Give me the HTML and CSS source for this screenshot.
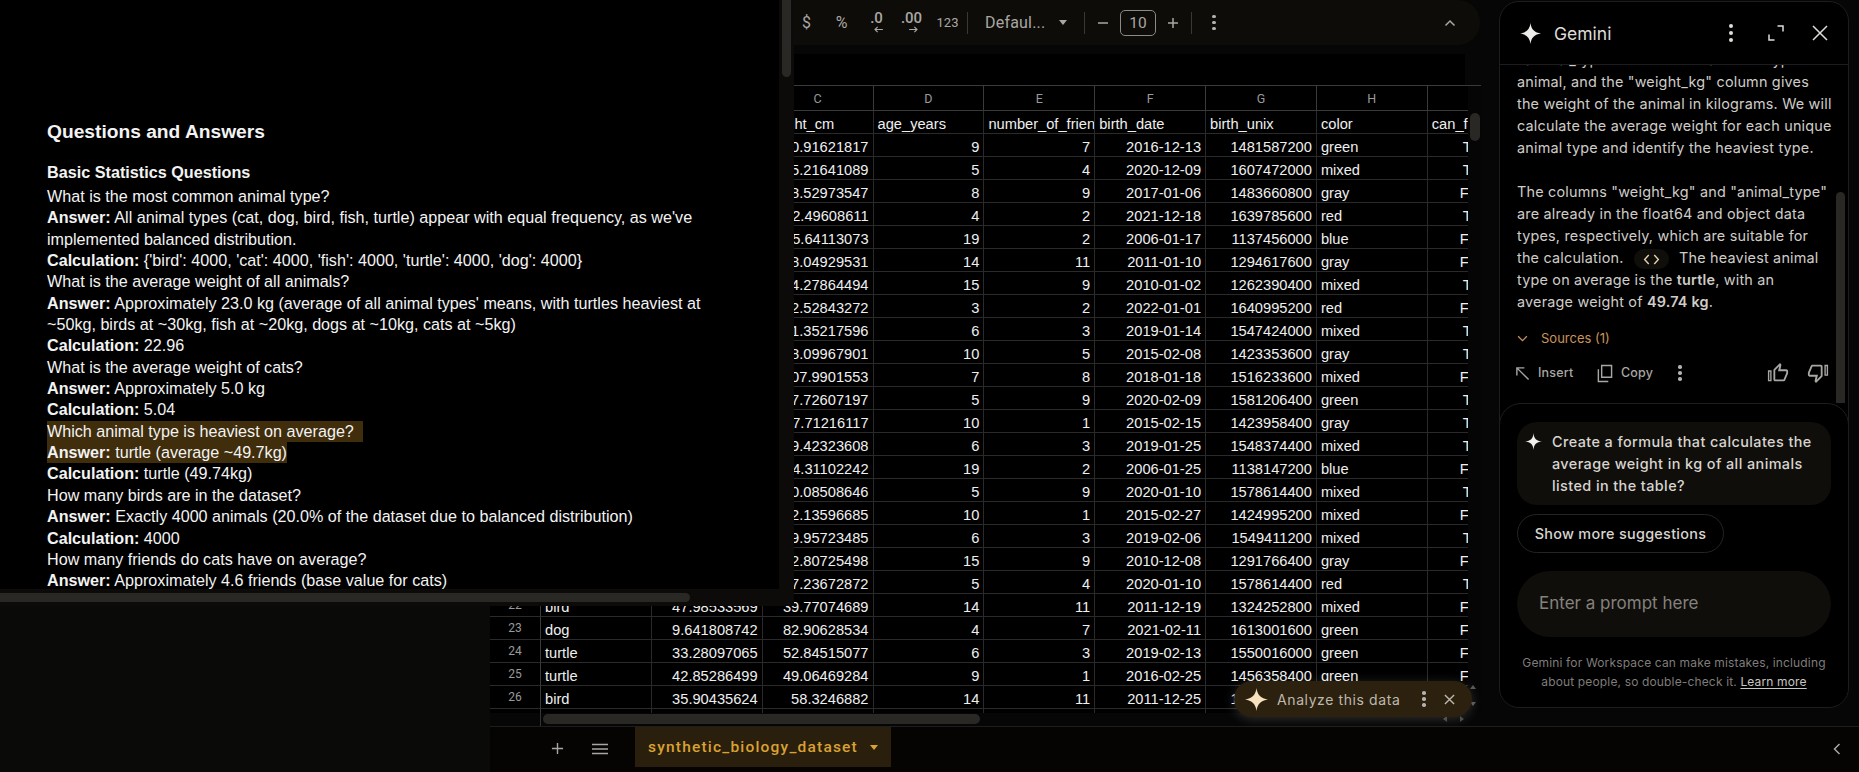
FILE: index.html
```html
<!DOCTYPE html>
<html lang="en">
<head>
<meta charset="utf-8" />
<title>synthetic_biology_dataset</title>
<link rel="stylesheet" href="styles.css">
</head>
<body>
  <!-- preview window lying over the sheet -->
  <section class="preview">
    <div class="doc">
      <h3>Questions and Answers</h3>
      <h4>Basic Statistics Questions</h4>
      <p>What is the most common animal type?</p>
      <p><b>Answer:</b> All animal types (cat, dog, bird, fish, turtle) appear with equal frequency, as we've implemented balanced distribution.</p>
      <p><b>Calculation:</b> {'bird': 4000, 'cat': 4000, 'fish': 4000, 'turtle': 4000, 'dog': 4000}</p>
      <p>What is the average weight of all animals?</p>
      <p><b>Answer:</b> Approximately 23.0 kg (average of all animal types' means, with turtles heaviest at ~50kg, birds at ~30kg, fish at ~20kg, dogs at ~10kg, cats at ~5kg)</p>
      <p><b>Calculation:</b> 22.96</p>
      <p>What is the average weight of cats?</p>
      <p><b>Answer:</b> Approximately 5.0 kg</p>
      <p><b>Calculation:</b> 5.04</p>
      <p><mark class="hl-wide">Which animal type is heaviest on average?</mark></p>
      <p><mark><b>Answer:</b> turtle (average ~49.7kg)</mark></p>
      <p><b>Calculation:</b> turtle (49.74kg)</p>
      <p>How many birds are in the dataset?</p>
      <p><b>Answer:</b> Exactly 4000 animals (20.0% of the dataset due to balanced distribution)</p>
      <p><b>Calculation:</b> 4000</p>
      <p>How many friends do cats have on average?</p>
      <p><b>Answer:</b> Approximately 4.6 friends (base value for cats)</p>
    </div>
    <div class="preview-vbar"><div class="thumb"></div></div>
    <div class="preview-hbar"><div class="thumb"></div></div>
  </section>

  <div class="app">
    <div class="top">
      <main class="sheet">
        <div class="toolbar">
          <span class="tb-btn">$</span>
          <span class="tb-btn">%</span>
          <span class="tb-btn dec">.0<svg viewBox="0 0 12 8" width="11" height="7"><path d="M11 4H2M5 1L2 4l3 3" /></svg></span>
          <span class="tb-btn dec">.00<svg viewBox="0 0 12 8" width="11" height="7"><path d="M1 4h9M7 1l3 3-3 3" /></svg></span>
          <span class="tb-btn small">123</span>
          <i class="tb-sep"></i>
          <span class="tb-font">Defaul...</span>
          <i class="tb-caret"></i>
          <i class="tb-sep after-font"></i>
          <svg class="tb-icon minus" viewBox="0 0 14 14" width="14" height="14"><path d="M2 7h10" /></svg>
          <span class="tb-size">10</span>
          <svg class="tb-icon" viewBox="0 0 14 14" width="14" height="14"><path d="M2 7h10M7 2v10" /></svg>
          <i class="tb-sep after-size"></i>
          <span class="dots tb-dots"><i></i><i></i><i></i></span>
          <svg class="tb-icon collapse" viewBox="0 0 14 14" width="14" height="14"><path d="M2.5 9.5L7 5l4.5 4.5" /></svg>
        </div>
        <div class="formula-bar"></div>
        <div class="grid-row">
          <div class="grid-clip">
            <table class="grid">
              <colgroup><col class="c-head"><col class="c"><col class="c"><col class="c"><col class="c"><col class="c"><col class="c"><col class="c"><col class="c"><col class="c"></colgroup>
              <tr class="letters"><th></th><th>A</th><th>B</th><th>C</th><th>D</th><th>E</th><th>F</th><th>G</th><th>H</th><th>I</th></tr>
              <tr><th></th><td>animal_type</td><td>weight_kg</td><td>height_cm</td><td>age_years</td><td>number_of_friends</td><td>birth_date</td><td>birth_unix</td><td>color</td><td>can_fly</td></tr>
              <tr><th></th><td></td><td></td><td class="n">0.91621817</td><td class="n">9</td><td class="n">7</td><td class="n">2016-12-13</td><td class="n">1481587200</td><td>green</td><td class="b">TRUE</td></tr>
              <tr><th></th><td></td><td></td><td class="n">5.21641089</td><td class="n">5</td><td class="n">4</td><td class="n">2020-12-09</td><td class="n">1607472000</td><td>mixed</td><td class="b">TRUE</td></tr>
              <tr><th></th><td></td><td></td><td class="n">8.52973547</td><td class="n">8</td><td class="n">9</td><td class="n">2017-01-06</td><td class="n">1483660800</td><td>gray</td><td class="b">FALSE</td></tr>
              <tr><th></th><td></td><td></td><td class="n">2.49608611</td><td class="n">4</td><td class="n">2</td><td class="n">2021-12-18</td><td class="n">1639785600</td><td>red</td><td class="b">TRUE</td></tr>
              <tr><th></th><td></td><td></td><td class="n">5.64113073</td><td class="n">19</td><td class="n">2</td><td class="n">2006-01-17</td><td class="n">1137456000</td><td>blue</td><td class="b">FALSE</td></tr>
              <tr><th></th><td></td><td></td><td class="n">8.04929531</td><td class="n">14</td><td class="n">11</td><td class="n">2011-01-10</td><td class="n">1294617600</td><td>gray</td><td class="b">FALSE</td></tr>
              <tr><th></th><td></td><td></td><td class="n">4.27864494</td><td class="n">15</td><td class="n">9</td><td class="n">2010-01-02</td><td class="n">1262390400</td><td>mixed</td><td class="b">TRUE</td></tr>
              <tr><th></th><td></td><td></td><td class="n">2.52843272</td><td class="n">3</td><td class="n">2</td><td class="n">2022-01-01</td><td class="n">1640995200</td><td>red</td><td class="b">FALSE</td></tr>
              <tr><th></th><td></td><td></td><td class="n">1.35217596</td><td class="n">6</td><td class="n">3</td><td class="n">2019-01-14</td><td class="n">1547424000</td><td>mixed</td><td class="b">TRUE</td></tr>
              <tr><th></th><td></td><td></td><td class="n">8.09967901</td><td class="n">10</td><td class="n">5</td><td class="n">2015-02-08</td><td class="n">1423353600</td><td>gray</td><td class="b">TRUE</td></tr>
              <tr><th></th><td></td><td></td><td class="n">07.9901553</td><td class="n">7</td><td class="n">8</td><td class="n">2018-01-18</td><td class="n">1516233600</td><td>mixed</td><td class="b">FALSE</td></tr>
              <tr><th></th><td></td><td></td><td class="n">7.72607197</td><td class="n">5</td><td class="n">9</td><td class="n">2020-02-09</td><td class="n">1581206400</td><td>green</td><td class="b">TRUE</td></tr>
              <tr><th></th><td></td><td></td><td class="n">7.71216117</td><td class="n">10</td><td class="n">1</td><td class="n">2015-02-15</td><td class="n">1423958400</td><td>gray</td><td class="b">TRUE</td></tr>
              <tr><th></th><td></td><td></td><td class="n">9.42323608</td><td class="n">6</td><td class="n">3</td><td class="n">2019-01-25</td><td class="n">1548374400</td><td>mixed</td><td class="b">TRUE</td></tr>
              <tr><th></th><td></td><td></td><td class="n">4.31102242</td><td class="n">19</td><td class="n">2</td><td class="n">2006-01-25</td><td class="n">1138147200</td><td>blue</td><td class="b">FALSE</td></tr>
              <tr><th></th><td></td><td></td><td class="n">0.08508646</td><td class="n">5</td><td class="n">9</td><td class="n">2020-01-10</td><td class="n">1578614400</td><td>mixed</td><td class="b">TRUE</td></tr>
              <tr><th></th><td></td><td></td><td class="n">2.13596685</td><td class="n">10</td><td class="n">1</td><td class="n">2015-02-27</td><td class="n">1424995200</td><td>mixed</td><td class="b">FALSE</td></tr>
              <tr><th></th><td></td><td></td><td class="n">9.95723485</td><td class="n">6</td><td class="n">3</td><td class="n">2019-02-06</td><td class="n">1549411200</td><td>mixed</td><td class="b">TRUE</td></tr>
              <tr><th></th><td></td><td></td><td class="n">2.80725498</td><td class="n">15</td><td class="n">9</td><td class="n">2010-12-08</td><td class="n">1291766400</td><td>gray</td><td class="b">FALSE</td></tr>
              <tr><th></th><td></td><td></td><td class="n">7.23672872</td><td class="n">5</td><td class="n">4</td><td class="n">2020-01-10</td><td class="n">1578614400</td><td>red</td><td class="b">TRUE</td></tr>
              <tr><th>22</th><td>bird</td><td class="n">47.98533569</td><td class="n">39.77074689</td><td class="n">14</td><td class="n">11</td><td class="n">2011-12-19</td><td class="n">1324252800</td><td>mixed</td><td class="b">FALSE</td></tr>
              <tr><th>23</th><td>dog</td><td class="n">9.641808742</td><td class="n">82.90628534</td><td class="n">4</td><td class="n">7</td><td class="n">2021-02-11</td><td class="n">1613001600</td><td>green</td><td class="b">FALSE</td></tr>
              <tr><th>24</th><td>turtle</td><td class="n">33.28097065</td><td class="n">52.84515077</td><td class="n">6</td><td class="n">3</td><td class="n">2019-02-13</td><td class="n">1550016000</td><td>green</td><td class="b">FALSE</td></tr>
              <tr><th>25</th><td>turtle</td><td class="n">42.85286499</td><td class="n">49.06469284</td><td class="n">9</td><td class="n">1</td><td class="n">2016-02-25</td><td class="n">1456358400</td><td>green</td><td class="b">FALSE</td></tr>
              <tr><th>26</th><td>bird</td><td class="n">35.90435624</td><td class="n">58.3246882</td><td class="n">14</td><td class="n">11</td><td class="n">2011-12-25</td><td class="n">1324771200</td><td></td><td class="b"></td></tr>
              <tr><th></th><td></td><td></td><td></td><td></td><td></td><td></td><td></td><td></td><td></td></tr>
            </table>
          </div>
          <div class="grid-vbar"><div class="thumb"></div></div>
        </div>
        <div class="grid-hbar"><div class="corner"></div><div class="thumb"></div></div>

        <i class="sa sa-up"></i>
        <i class="sa sa-down"></i>
        <i class="sa sa-left"></i>
        <i class="sa sa-right"></i>

        <!-- floating chip over the bottom right of the grid -->
        <div class="analyze">
          <svg class="star" viewBox="0 0 24 24" width="23" height="23"><path d="M12 0C12.8 7.2 16.8 11.2 24 12C16.8 12.8 12.8 16.8 12 24C11.2 16.8 7.2 12.8 0 12C7.2 11.2 11.2 7.2 12 0Z" /></svg>
          <span class="analyze-label">Analyze this data</span>
          <span class="dots"><i></i><i></i><i></i></span>
          <svg class="close" viewBox="0 0 12 12" width="11" height="11"><path d="M1 1l10 10M11 1L1 11" /></svg>
        </div>
      </main>

      <aside class="panel">
        <header class="panel-head">
          <svg class="star" viewBox="0 0 24 24" width="21" height="21"><path d="M12 0C12.8 7.2 16.8 11.2 24 12C16.8 12.8 12.8 16.8 12 24C11.2 16.8 7.2 12.8 0 12C7.2 11.2 11.2 7.2 12 0Z" /></svg>
          <span class="panel-title">Gemini</span>
          <span class="dots"><i></i><i></i><i></i></span>
          <svg class="expand" viewBox="0 0 16 16" width="16" height="16"><path d="M9.5 1H15v5.5M6.5 15H1V9.5" /></svg>
          <svg class="close" viewBox="0 0 16 16" width="16" height="16"><path d="M1 1l14 14M15 1L1 15" /></svg>
        </header>
        <div class="panel-scroll">
          <p class="reply">"animal_type" column indicates the type of animal, and the "weight_kg" column gives the weight of the animal in kilograms. We will calculate the average weight for each unique animal type and identify the heaviest type.</p>
          <p class="reply">The columns "weight_kg" and "animal_type" are already in the float64 and object data types, respectively, which are suitable for the calculation. <span class="code-chip"><svg viewBox="0 0 18 12" width="17" height="11"><path d="M6 1L1.5 6 6 11M12 1l4.5 5-4.5 5" /></svg></span> The heaviest animal type on average is the <b>turtle</b>, with an average weight of <b>49.74 kg</b>.</p>
          <div class="sources">
            <svg viewBox="0 0 12 8" width="11" height="7"><path d="M1 1.5l5 5 5-5" /></svg>
            <span>Sources (1)</span>
          </div>
          <div class="actions">
            <svg class="a-insert" viewBox="0 0 16 16" width="15" height="15"><path d="M14.5 14.5L2 2M2 10V2h8" /></svg>
            <span class="a-label">Insert</span>
            <svg class="a-copy" viewBox="0 0 18 20" width="17" height="19"><path d="M6 1.5h10.5v12.5H6zM2.5 5.5v13h10.500" /></svg>
            <span class="a-label copy">Copy</span>
            <span class="dots"><i></i><i></i><i></i></span>
            <svg class="a-up" viewBox="0 0 24 24" width="22" height="22"><path fill-rule="evenodd" d="M9 21h9c.83 0 1.54-.5 1.84-1.22l3.02-7.05c.09-.23.14-.47.14-.73v-2c0-1.1-.9-2-2-2h-6.31l.95-4.57.03-.32c0-.41-.17-.79-.44-1.06L14.17 1 7.58 7.59C7.22 7.95 7 8.45 7 9v10c0 1.1.9 2 2 2zM9 9l4.34-4.34L12 10h9v2l-3 7H9V9zM1 9h4v12H1zM2.5 10.5v9h1v-9z" /></svg>
            <svg class="a-down" viewBox="0 0 24 24" width="22" height="22"><path fill-rule="evenodd" d="M9 21h9c.83 0 1.54-.5 1.84-1.22l3.02-7.05c.09-.23.14-.47.14-.73v-2c0-1.1-.9-2-2-2h-6.31l.95-4.57.03-.32c0-.41-.17-.79-.44-1.06L14.17 1 7.58 7.59C7.22 7.95 7 8.45 7 9v10c0 1.1.9 2 2 2zM9 9l4.34-4.34L12 10h9v2l-3 7H9V9zM1 9h4v12H1zM2.5 10.5v9h1v-9z" /></svg>
          </div>
          <div class="panel-vbar"></div>
        </div>
        <div class="composer">
          <div class="suggestion">
            <svg class="star" viewBox="0 0 24 24" width="17" height="17"><path d="M12 0C12.6 8 16 11.4 24 12C16 12.6 12.6 16 12 24C11.4 16 8 12.6 0 12C8 11.4 11.4 8 12 0Z" /></svg>
            <span>Create a formula that calculates the average weight in kg of all animals listed in the table?</span>
          </div>
          <div class="more">Show more suggestions</div>
          <div class="prompt">Enter a prompt here</div>
          <p class="disclaimer">Gemini for Workspace can make mistakes, including about people, so double-check it. <u>Learn more</u></p>
        </div>
      </aside>
    </div>

    <footer class="tabs">
      <svg class="tab-icon plus" viewBox="0 0 14 14" width="13" height="13"><path d="M7 1v12M1 7h12" /></svg>
      <svg class="tab-icon menu" viewBox="0 0 16 12" width="16" height="12"><path d="M0 1.5h16M0 6h16M0 10.5h16" /></svg>
      <div class="tab"><span>synthetic_biology_dataset</span><i></i></div>
      <svg class="tab-icon collapse-side" viewBox="0 0 8 12" width="8" height="12"><path d="M6.5 1L1.5 6l5 5" /></svg>
    </footer>
  </div>
</body>
</html>
```
FILE: styles.css
```css
*{
  margin:0;
  padding:0;
  box-sizing:border-box;
}
body{
  width:1859px;
  height:772px;
  overflow:hidden;
  background:#0a0a09;
  font-family:"Liberation Sans",Arial,sans-serif;
  position:relative;
}
i{
  display:block;
}
.thumb{
  background:#2a2825;
}

/* preview window */
.preview{
  position:absolute;
  top:0;
  left:0;
  width:794px;
  height:606px;
  background:#0c0b09;
  z-index:5;
}
.doc{
  width:779px;
  height:589px;
  overflow:hidden;
  background:#000;
  color:#f3f3f3;
  padding:121px 46px 0 47px;
  font-size:16.15px;
  line-height:21.35px;
}
.doc h3{
  font-size:19.2px;
  line-height:22px;
  margin-bottom:18px;
}
.doc h4{
  font-size:16.2px;
  line-height:22px;
  margin-bottom:3px;
}
.doc mark{
  display:inline-block;
  background:#3f2d0c;
  color:inherit;
  vertical-align:top;
}
.doc .hl-wide{
  padding-right:9px;
}
.preview-vbar{
  position:absolute;
  top:0;
  left:782px;
  width:9px;
}
.preview-vbar .thumb{
  height:77px;
  border-radius:0 0 5px 5px;
}
.preview-hbar{
  padding-top:4px;
}
.preview-hbar .thumb{
  width:690px;
  height:9px;
  border-radius:0 5px 5px 0;
}

/* page frame */
.app{
  margin-left:490px;
  height:772px;
  display:flex;
  flex-direction:column;
  position:relative;
}
.top{
  display:flex;
  height:726px;
  background:#060606;
}
.sheet{
  width:1009px;
  position:relative;
}

/* toolbar */
.toolbar{
  width:990px;
  height:45px;
  background:#0e0c09;
  border-radius:0 22px 22px 0;
  padding-left:299px;
  padding-right:23px;
  display:flex;
  align-items:center;
  color:#a9a7a3;
  font-family:Roboto,sans-serif;
  font-size:16px;
}
.tb-btn{
  width:35px;
  text-align:center;
  position:relative;
}
.tb-btn.small{
  font-size:13px;
  margin-left:1px;
}
.tb-btn.dec{
  font-size:15px;
  font-weight:500;
  line-height:14px;
  margin-top:-9px;
}
.tb-btn.dec svg{
  position:absolute;
  left:14px;
  top:15px;
}
.toolbar svg path,.sources path,.panel-head .expand path,.panel-head .close path,.actions path,.analyze .close path,.tabs path,.code-chip path{
  fill:none;
  stroke:currentColor;
  stroke-width:1.5;
}
.toolbar .dec path{
  stroke-width:1.3;
}
.tb-sep{
  width:1px;
  height:22px;
  background:#3a3833;
  margin-left:2px;
}
.tb-font{
  margin-left:17px;
  font-size:16px;
  width:60px;
  letter-spacing:.2px;
  white-space:nowrap;
}
.tb-caret{
  width:0;
  height:0;
  margin-left:14px;
  border-left:4.5px solid transparent;
  border-right:4.5px solid transparent;
  border-top:5px solid #a9a7a3;
}
.after-font{
  margin-left:17px;
}
.tb-icon.minus{
  margin-left:11px;
}
.tb-size{
  width:36px;
  height:26px;
  margin:0 10px;
  border:1px solid #8c8a86;
  border-radius:5px;
  text-align:center;
  line-height:24px;
  font-size:15.5px;
}
.after-size{
  margin-left:11px;
}
.tb-dots{
  margin-left:20px;
}
.tb-icon.collapse{
  margin-left:auto;
  width:14px;
  stroke:#a9a7a3;
}
.dots{
  display:inline-flex;
  flex-direction:column;
  gap:2.5px;
  color:#b4b2ae;
}
.dots i{
  width:3.5px;
  height:3.5px;
  border-radius:50%;
  background:currentColor;
}

.formula-bar{
  width:975px;
  height:31px;
  margin-top:9px;
  background:#000;
}

/* grid */
.grid-row{
  display:flex;
  height:628px;
}
.grid-clip{
  width:978px;
  overflow:hidden;
  background:#000;
  border-top:1px solid #3a3a3a;
}
.grid{
  border-collapse:separate;
  border-spacing:0;
  table-layout:fixed;
  width:1048.5px;
  font-size:14.67px;
  color:#efefef;
}
.c-head{
  width:51px;
}
.c{
  width:110.85px;
}
.grid tr{
  height:23px;
}
.grid td,.grid th{
  height:23px;
  border-right:1px solid #2a2a2a;
  border-bottom:1px solid #2a2a2a;
  padding:5px 4px 0 4px;
  white-space:nowrap;
  overflow:hidden;
  font-weight:400;
  line-height:17px;
}
.grid th{
  padding:0;
  font-family:Roboto,sans-serif;
  font-size:12px;
  color:#9a9a9a;
  text-align:center;
  vertical-align:top;
  line-height:22px;
  border-right-color:#3a3a3a;
}
.grid .letters th{
  height:25px;
  padding-top:2px;
  border-bottom-color:#3a3a3a;
  border-right-color:#3a3a3a;
  font-size:12.5px;
  line-height:22px;
}
.grid .letters{
  height:25px;
}
.grid .n{
  text-align:right;
}
.grid .b{
  text-align:center;
}
.grid-vbar{
  width:13px;
  background:#050505;
  border-top:1px solid #3a3a3a;
  padding:27px 0 0 2px;
}
.grid-vbar .thumb{
  width:10px;
  height:28px;
  border-radius:5px;
}
.grid-hbar{
  width:990px;
  height:13px;
  display:flex;
  gap:2px;
  align-items:flex-start;
  padding-top:1px;
}
.grid-hbar .corner{
  width:51px;
  height:13px;
  margin-top:-1px;
  border-right:1px solid #333;
  flex:none;
}
.grid-hbar .thumb{
  width:437px;
  height:10px;
  border-radius:5px;
}

/* little scroll arrows in the corner, half under the chip */
.sa{
  position:absolute;
  width:0;
  height:0;
  border:3px solid transparent;
}
.sa-up{
  left:980px;
  top:682px;
  border-bottom:4px solid #555;
}
.sa-down{
  left:980px;
  top:702px;
  border-top:4px solid #555;
}
.sa-left{
  left:950px;
  top:716px;
  border-right:4px solid #444;
}
.sa-right{
  left:970px;
  top:716px;
  border-left:4px solid #444;
}

/* floating chip */
.analyze{
  position:absolute;
  left:744px;
  top:681px;
  width:238px;
  height:36px;
  border-radius:18px;
  background:#2c200e;
  box-shadow:0 2px 12px rgba(255,255,255,.16);
  display:flex;
  align-items:center;
  padding-left:11px;
  color:#bdb9ae;
  font-family:Inter,sans-serif;
  font-size:14px;
  z-index:3;
}
.analyze .star{
  fill:#f6e3bd;
}
.analyze-label{
  margin-left:9px;
  letter-spacing:.6px;
  white-space:nowrap;
}
.analyze .dots{
  margin-left:22px;
}
.analyze .close{
  margin-left:18px;
}

/* gemini panel */
.panel{
  width:350px;
  margin:1px 0 0 0;
  height:707px;
  background:#000;
  border:1px solid #1d1d20;
  border-radius:20px;
  display:flex;
  flex-direction:column;
  color:#cfccc8;
  font-family:Inter,sans-serif;
  font-size:14.4px;
  overflow:hidden;
}
.panel-head{
  flex:none;
  height:63px;
  border-bottom:1px solid #1d1d20;
  display:flex;
  align-items:center;
  padding-left:20px;
  color:#dfddd8;
}
.panel-head .star{
  fill:#efedea;
}
.panel-title{
  margin-left:13px;
  font-size:17.5px;
  width:175px;
}
.panel-head .dots{
  gap:3px;
  color:#dfddd8;
}
.panel-head .dots i{
  width:4px;
  height:4px;
}
.panel-head .expand{
  margin-left:35px;
}
.panel-head .close{
  margin-left:28px;
}
.panel-scroll{
  flex:1;
  overflow:hidden;
  padding:0 0 0 17px;
  position:relative;
  line-height:22px;
  letter-spacing:.2px;
}
.reply{
  width:316px;
  margin-bottom:22px;
}
.reply:first-child{
  margin-top:-16px;
}
.reply b{
  font-weight:600;
}
.code-chip{
  display:inline-flex;
  align-items:center;
  justify-content:center;
  width:35px;
  height:20px;
  margin:0 6px;
  border-radius:10px;
  background:#100e0b;
  color:#e6d3b0;
  vertical-align:middle;
}
.sources{
  display:flex;
  align-items:center;
  gap:13px;
  color:#c9935a;
  font-size:13px;
  letter-spacing:0;
  margin-top:-7px;
  height:20px;
}
.actions{
  display:flex;
  align-items:center;
  margin:15px 0 0 -2px;
  height:20px;
  color:#a9a7a3;
}
.a-label{
  font-size:12.5px;
  font-weight:500;
  letter-spacing:.2px;
  margin-left:8px;
  width:58px;
}
.a-label.copy{
  width:57px;
}
.a-up{
  margin-left:85px;
}
.a-down{
  margin-left:18px;
  transform:rotate(180deg);
}
.actions .a-up path,.actions .a-down path{
  fill:currentColor;
  stroke:none;
}
.panel-vbar{
  position:absolute;
  top:127px;
  right:3px;
  bottom:0;
  width:9px;
  border-radius:5px 5px 0 0;
  background:#2a2825;
}
.composer{
  flex:none;
  height:305px;
  margin:0 -1px -1px -1px;
  background:#000;
  border:1px solid #1d1d20;
  border-radius:22px 22px 20px 20px;
  padding:18px 17px 0 17px;
  position:relative;
}
.suggestion{
  height:83px;
  background:#100e0b;
  border-radius:20px;
  padding:9px 12px 0 35px;
  line-height:22px;
  letter-spacing:.42px;
  position:relative;
  font-weight:500;
  color:#d8d5d0;
}
.suggestion .star{
  position:absolute;
  left:8px;
  top:11px;
  fill:#f2f0ec;
}
.more{
  width:207px;
  height:39px;
  margin-top:9px;
  border:1px solid #23232a;
  border-radius:20px;
  text-align:center;
  line-height:37px;
  letter-spacing:.3px;
  font-weight:500;
  color:#d8d5d0;
}
.prompt{
  height:66px;
  margin-top:18px;
  padding-left:22px;
  background:#100e0b;
  border-radius:33px;
  font-size:17px;
  line-height:64px;
  color:#85827d;
}
.disclaimer{
  margin-top:17px;
  text-align:center;
  font-size:12px;
  line-height:18.5px;
  letter-spacing:.15px;
  color:#7f7d7a;
}
.disclaimer u{
  color:#c8c6c2;
  text-underline-offset:2px;
}

/* sheet tabs */
.tabs{
  flex:none;
  height:46px;
  border-top:1px solid #1d1d1d;
  background:#050403;
  display:flex;
  align-items:flex-start;
  color:#a8a6a2;
}
.tab-icon.plus{
  margin:15px 0 0 61px;
}
.tab-icon.menu{
  margin:16px 0 0 28px;
}
.tab{
  display:flex;
  align-items:center;
  width:256px;
  height:40px;
  margin:0 0 0 27px;
  background:#2a1e0c;
  padding-left:13px;
  color:#d9a233;
  font-family:Roboto,sans-serif;
  font-weight:500;
  font-size:15.5px;
  letter-spacing:1.2px;
  white-space:nowrap;
}
.tab i{
  width:0;
  height:0;
  margin-left:12px;
  border-left:4px solid transparent;
  border-right:4px solid transparent;
  border-top:5px solid #d9a233;
}
.tab-icon.collapse-side{
  margin:16px 18px 0 auto;
}
```
